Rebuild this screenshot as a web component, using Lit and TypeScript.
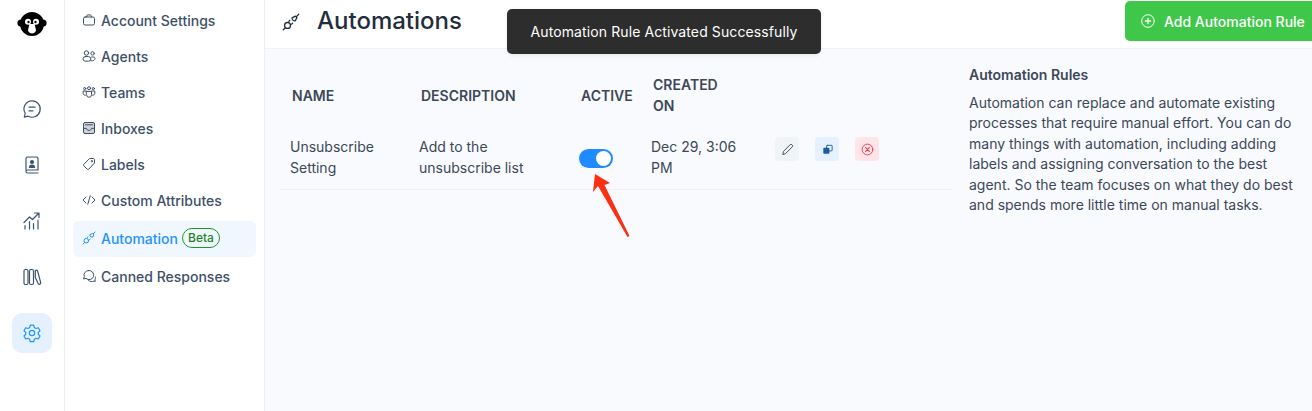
import { LitElement, html, css, svg } from 'lit';
import { customElement } from 'lit/decorators.js';

const plugIcon = svg`<circle cx="4.300" cy="9.700" r="2.300"/><path d="M10.200 6.200a2.300 2.300 0 0 1-2.400-2.400l2.600-1.400 1.200 1.200zM2.600 11.400 1 13M11.200 2.800 13 1M5.300 6.500 6.100 5.700M7.500 8.700 8.300 7.900"/>`;

const navItems = [
  { label: 'Account Settings', icon: svg`<rect x="1.500" y="4" width="11" height="8" rx="1.600"/><path d="M4.800 4V2.800c0-.5.4-.9.9-.9h2.600c.5 0 .9.4.9.9V4"/>` },
  { label: 'Agents', icon: svg`<circle cx="4.400" cy="4" r="2.200"/><circle cx="10.600" cy="4.400" r="1.700"/><rect x="1" y="7.600" width="7.800" height="4.600" rx="2.300"/><path d="M9.600 8h2c.8 0 1.400.6 1.400 1.300 0 1.600-1.400 2.600-4 2.600"/>` },
  { label: 'Teams', icon: svg`<circle cx="7" cy="3.200" r="1.500"/><circle cx="2.700" cy="3.600" r="1.100"/><circle cx="11.300" cy="3.600" r="1.100"/><path d="M4.500 6.400h5v3.400a2.500 2.500 0 0 1-5 0z"/><path d="M4.400 6H1.200v2.400c0 1.200 1 2 2.200 1.900M9.600 6h3.200v2.400c0 1.200-1 2-2.200 1.900"/>` },
  { label: 'Inboxes', icon: svg`<rect x="1.500" y="1.500" width="11" height="11" rx="1.500" fill="currentColor" fill-opacity=".25"/><path d="M3.500 3.800h7M1.500 7.400h3c.2 1.200 1.200 2 2.500 2s2.300-.8 2.500-2h3"/>` },
  { label: 'Labels', icon: svg`<path d="M8 1.500h3.300c.7 0 1.200.5 1.200 1.200V6L6.800 12.100c-.5.500-1.200.5-1.700 0L1.900 8.900c-.5-.5-.5-1.200 0-1.700z"/><circle cx="9.800" cy="4.200" r=".7"/>` },
  { label: 'Custom Attributes', icon: svg`<path d="M4 4 1 7l3 3M10 4l3 3-3 3M8.200 2.800 5.800 11.200"/>` },
  { label: 'Automation', active: true, badge: 'Beta', icon: plugIcon },
  { label: 'Canned Responses', icon: svg`<path d="M6.500 1.500a4.600 4.600 0 0 0-4.200 6.300L1.600 10l2.400-.6A4.600 4.600 0 1 0 6.500 1.500z"/><path d="M6.500 11.500c1.600 1.300 3.800 1.400 5.300.6l1.500.3-.4-1.500c.6-1 .8-2 .5-3"/>` },
];

const railIcons = [
  svg`<path d="M10 1.800a8.200 8.200 0 1 1-3.900 15.400l-3.800.9.900-3.800A8.200 8.200 0 0 1 10 1.800z"/><path d="M7 8.200h6M7 11.800h4"/>`,
  svg`<path d="M4 15V3.500C4 2.700 4.700 2 5.500 2h9c.8 0 1.500.7 1.500 1.500V15H5.500C4.700 15 4 15.700 4 16.500S4.700 18 5.500 18H16"/><circle cx="10" cy="7" r="1.500" fill="currentColor"/><path d="M7.500 12.300c0-1.400 1-2.200 2.500-2.200s2.500.8 2.500 2.200z" fill="currentColor"/>`,
  svg`<path d="M2 11.500 7.500 6l3 2.500L16.500 2.500M12.500 2h4.500v4.500M3 14.500V18M7.500 10.500V18M11.500 12.500V18M16 9v9"/>`,
  svg`<rect x="2" y="2.500" width="4" height="15" rx="1.500"/><rect x="7.500" y="2.500" width="4" height="15" rx="1.500"/><path d="M13.300 3.600c.4-.6 1.700-.9 2.200.1L18.700 15.600c.3 1.300-1.600 2.300-2.400 1.200L13.300 10.500z"/>`,
];

@customElement('app-root')
export class AppRoot extends LitElement {
  static styles = css`
    :host {
      display: block;
      width: 1312px;
      height: 411px;
      overflow: hidden;
      position: relative;
      font-family: Inter, 'Noto Sans', sans-serif;
      color: #3c4858;
      font-size: 14px;
    }
    svg { display: block; fill: none; stroke: currentColor; stroke-linecap: round; stroke-linejoin: round; }
    .page { display: flex; height: 411px; background: #fff; }

    .rail {
      width: 64px;
      flex: none;
      border-right: 1px solid #ebf0f5;
      display: flex;
      flex-direction: column;
      align-items: center;
    }
    .logo { margin-top: 12px; margin-bottom: 53px; height: 24px; }
    .rail-btns { display: flex; flex-direction: column; gap: 16px; }
    .rail-btn {
      width: 40px;
      height: 40px;
      border-radius: 10px;
      display: flex;
      align-items: center;
      justify-content: center;
      color: #3c5572;
    }
    .rail-btn svg { stroke-width: 1.2; }
    .rail-btn.active { background: #e5f1fe; color: #1f93ff; }

    .side {
      width: 200px;
      flex: none;
      box-sizing: border-box;
      border-right: 1px solid #ebf0f5;
      padding: 3px 8px 0 8px;
    }
    .nav-item {
      height: 36px;
      box-sizing: border-box;
      padding-bottom: 2px;
      display: flex;
      align-items: center;
      border-radius: 6px;
      padding-left: 9px;
      color: #3d5068;
      font-weight: 500;
    }
    .nav-item svg { width: 14px; height: 14px; margin-right: 5px; stroke-width: 1; }
    .nav-item.active { background: #f1f7fe; color: #1f93ff; margin: 2px 0; }
    .badge {
      margin-left: 4px;
      height: 18px;
      padding: 0 5px;
      border: 1px solid #1c9a23;
      border-radius: 10px;
      color: #1f861f;
      font-size: 12px;
      line-height: 18px;
    }

    .main { flex: 1; min-width: 0; display: flex; flex-direction: column; background: #f8fafe; }
    .head {
      height: 49px;
      box-sizing: border-box;
      flex: none;
      background: #fff;
      border-bottom: 1px solid #eff2f8;
      display: flex;
      align-items: flex-start;
      padding-left: 17px;
    }
    .head-icon { width: 18px; height: 18px; margin-top: 13px; margin-right: 17px; color: #1f2d3d; stroke-width: 1; }
    h1 {
      margin: 3px 0 0;
      font-size: 24px;
      line-height: 36px;
      font-weight: 500;
      color: #1f2d3d;
      flex: 1;
    }
    .add {
      flex: none;
      width: 200px;
      height: 40px;
      margin-top: 1px;
      margin-right: -13px;
      box-sizing: border-box;
      padding-left: 16px;
      border: 0;
      border-radius: 5px;
      background: #3fc74a;
      color: #fff;
      display: flex;
      align-items: center;
      gap: 9px;
      font: 500 14px Inter, sans-serif;
    }
    .add svg { width: 14px; height: 14px; stroke-width: 1; }

    .content { display: flex; padding: 12px 0 0 15px; }
    .left { width: 673px; flex: none; }
    table { border-collapse: collapse; width: 100%; table-layout: fixed; }
    th {
      padding: 13px 10px 8px 12px;
      text-align: left;
      font-size: 14px;
      line-height: 21px;
      font-weight: 600;
      color: #3c4858;
      text-transform: uppercase;
    }
    th.created { padding-right: 40px; }
    td {
      vertical-align: top;
      padding: 12px 10px 11px;
      line-height: 21px;
      color: #3c4858;
      border-bottom: 1px solid #eff2f8;
    }
    .switch {
      display: block;
      width: 34px;
      height: 19px;
      border-radius: 10px;
      background: #1f8bff;
      margin-top: 13px;
      position: relative;
    }
    .switch::after {
      content: '';
      position: absolute;
      right: 2px;
      top: 2px;
      width: 15px;
      height: 15px;
      border-radius: 50%;
      background: #fff;
    }
    .actions { display: flex; gap: 16px; padding: 1px 0 0 2px; }
    .act {
      width: 24px;
      height: 24px;
      border-radius: 4px;
      display: flex;
      align-items: center;
      justify-content: center;
    }
    .act svg { width: 13px; height: 13px; stroke-width: 1; }
    .act.grey { background: #f0f4f7; color: #3c4858; }
    .act.blue { background: #e5f1fe; color: #1e5aa0; }
    .act.red { background: #ffe5e7; color: #e9364c; }

    .right { margin-left: 16px; width: 334px; flex: none; }
    .right h2 { margin: 3px 0 8px; font-size: 14px; line-height: 21px; font-weight: 600; color: #3c4858; }
    .right p { margin: 0; line-height: 20.4px; color: #3c4858; }

    .toast {
      position: absolute;
      left: 507px;
      top: 9px;
      width: 314px;
      height: 45px;
      box-sizing: border-box;
      padding-bottom: 1px;
      border-radius: 5px;
      background: #2d2d2d;
      color: #fff;
      letter-spacing: 0.1px;
      display: flex;
      align-items: center;
      justify-content: center;
      box-shadow: 0 1px 4px rgba(0,0,0,.08);
    }
    .arrow { position: absolute; left: 590px; top: 170px; width: 42px; height: 70px; }
    .arrow path { fill: #fb2f14; stroke: none; }
  `;

  render() {
    return html`
      <div class="page">
        <aside class="rail">
          <div class="logo">
            <svg width="30" height="24" viewBox="0 0 30 24" style="stroke:none">
              <circle cx="4" cy="11" r="3.600" fill="#000"/>
              <circle cx="26" cy="11" r="3.600" fill="#000"/>
              <circle cx="15" cy="12" r="12" fill="#000"/>
              <circle cx="11" cy="9.800" r="3" fill="#fff"/>
              <circle cx="19" cy="9.800" r="3" fill="#fff"/>
              <circle cx="11.500" cy="10" r="1.200" fill="#000"/>
              <circle cx="18.500" cy="10" r="1.200" fill="#000"/>
              <path d="M12.300 12h5.400l1.300 6.500c-.6 2-2.200 3-4 3s-3.400-1-4-3z" fill="#fff"/>
            </svg>
          </div>
          <div class="rail-btns">
            ${railIcons.map(i => html`<div class="rail-btn"><svg width="20" height="20" viewBox="0 0 20 20">${i}</svg></div>`)}
            <div class="rail-btn active">
              <svg width="20" height="20" viewBox="0 0 20 20">
                <path d="M8.300 2.200h3.400l.6 2.300 1.700 1 2.300-.7 1.700 3-1.700 1.600v2l1.700 1.600-1.700 3-2.300-.7-1.700 1-.6 2.300H8.300l-.6-2.300-1.700-1-2.300.7-1.700-3 1.700-1.600v-2L2 7.800l1.700-3 2.300.7 1.700-1z"/>
                <circle cx="10" cy="10" r="2.600"/>
              </svg>
            </div>
          </div>
        </aside>

        <nav class="side">
          ${navItems.map(n => html`
            <div class="nav-item ${n.active ? 'active' : ''}">
              <svg viewBox="0 0 14 14">${n.icon}</svg>
              <span>${n.label}</span>
              ${n.badge ? html`<span class="badge">${n.badge}</span>` : ''}
            </div>`)}
        </nav>

        <main class="main">
          <header class="head">
            <svg class="head-icon" viewBox="0 0 14 14">${plugIcon}</svg>
            <h1>Automations</h1>
            <button class="add">
              <svg viewBox="0 0 14 14"><circle cx="7" cy="7" r="6.300"/><path d="M7 4.500v5M4.500 7h5" stroke-width="1.300"/></svg>
              Add Automation Rule
            </button>
          </header>
          <div class="content">
            <div class="left">
              <table>
                <colgroup><col style="width:129px"/><col style="width:160px"/><col style="width:72px"/><col style="width:122px"/><col/></colgroup>
                <thead>
                  <tr><th>Name</th><th>Description</th><th>Active</th><th class="created">Created on</th><th></th></tr>
                </thead>
                <tbody>
                  <tr>
                    <td>Unsubscribe Setting</td>
                    <td>Add to the unsubscribe list</td>
                    <td><span class="switch"></span></td>
                    <td>Dec 29, 3:06 PM</td>
                    <td>
                      <div class="actions">
                        <span class="act grey"><svg viewBox="0 0 14 14"><path d="M2 12l.7-3L9.900 1.800c.5-.5 1.300-.5 1.800 0l.5.500c.5.500.5 1.300 0 1.800L5 11.300z"/></svg></span>
                        <span class="act blue"><svg viewBox="0 0 14 14"><rect x="6" y="2.500" width="6" height="6" rx=".8"/><rect x="2.500" y="5" width="6.500" height="6.500" rx=".8" fill="currentColor" stroke="none"/></svg></span>
                        <span class="act red"><svg viewBox="0 0 14 14"><circle cx="7" cy="7" r="5.800"/><path d="M5 5l4 4M9 5l-4 4" stroke-width="1.200"/></svg></span>
                      </div>
                    </td>
                  </tr>
                </tbody>
              </table>
            </div>
            <section class="right">
              <h2>Automation Rules</h2>
              <p>Automation can replace and automate existing processes that require manual effort. You can do many things with automation, including adding labels and assigning conversation to the best agent. So the team focuses on what they do best and spends more little time on manual tasks.</p>
            </section>
          </div>
        </main>
      </div>
      <div class="toast">Automation Rule Activated Successfully</div>
      <svg class="arrow" viewBox="0 0 42 70"><path d="M5 4 20 13 14.500 15 39.500 66 37.500 67 8 16 3 22z"/></svg>
    `;
  }
}
